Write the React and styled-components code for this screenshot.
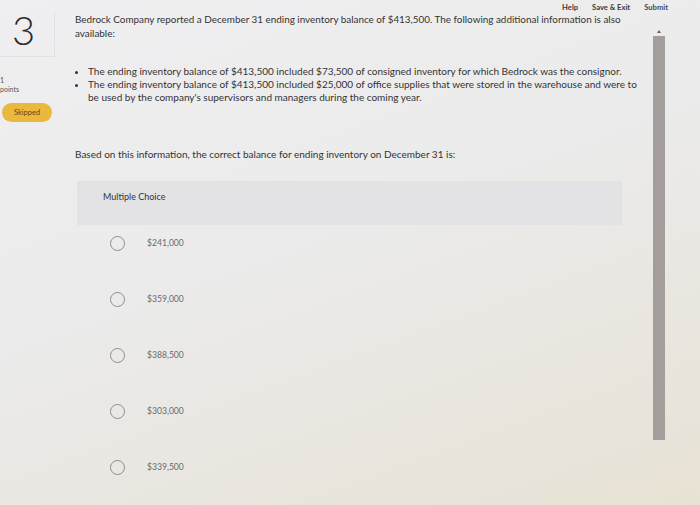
import React from 'react';
import styled, { createGlobalStyle } from 'styled-components';

const GlobalStyle = createGlobalStyle`
  html, body {
    margin: 0;
    padding: 0;
  }
  body {
    font-family: Lato, "Liberation Sans", Arial, sans-serif;
    color: #333;
  }
`;

const options = ['$241,000', '$359,000', '$388,500', '$303,000', '$339,500'];

const bullets = [
  'The ending inventory balance of $413,500 included $73,500 of consigned inventory for which Bedrock was the consignor.',
  "The ending inventory balance of $413,500 included $25,000 of office supplies that were stored in the warehouse and were to be used by the company's supervisors and managers during the coming year.",
];

const App = () => (
  <>
    <GlobalStyle />
    <Page>
      <Header>
        <NavLink>Help</NavLink>
        <NavLink>Save &amp; Exit</NavLink>
        <NavLink $strong>Submit</NavLink>
      </Header>
      <Body>
        <Rail>
          <NumberBox>3</NumberBox>
          <Points>
            <span>1</span>
            <span>points</span>
          </Points>
          <StatusPill>Skipped</StatusPill>
        </Rail>

        <Main>
          <Question>
            Bedrock Company reported a December 31 ending inventory balance of $413,500. The
            following additional information is also available:
          </Question>
          <BulletList>
            {bullets.map((b) => (
              <li key={b}>{b}</li>
            ))}
          </BulletList>
          <Prompt>
            Based on this information, the correct balance for ending inventory on December 31 is:
          </Prompt>

          <ChoicePanel>Multiple Choice</ChoicePanel>
          <OptionList>
            {options.map((o) => (
              <Option key={o}>
                <Radio />
                <OptionText>{o}</OptionText>
              </Option>
            ))}
          </OptionList>
        </Main>

        <Side>
          <ScrollTrack>
            <ScrollArrow />
          </ScrollTrack>
        </Side>
      </Body>
    </Page>
  </>
);

const Page = styled.div`
  width: 700px;
  height: 505px;
  overflow: hidden;
  background: linear-gradient(160deg, #efeff1 0%, #ebebeb 45%, #e9e6df 75%, #e8e2d4 100%);
`;

const Header = styled.div`
  height: 10px;
  padding-top: 2px;
  display: flex;
  justify-content: flex-end;
  gap: 14px;
  padding-right: 32px;
`;

const NavLink = styled.span`
  font-size: 7.6px;
  font-weight: 700;
  line-height: 10px;
  color: ${(p) => (p.$strong ? '#3f4a63' : '#3a3a3a')};
`;

const Body = styled.div`
  display: flex;
`;

const Rail = styled.div`
  width: 62px;
  flex-shrink: 0;
  display: flex;
  flex-direction: column;
`;

const NumberBox = styled.div`
  width: 42px;
  height: 44px;
  padding-left: 12px;
  border-right: 1px solid #e1e1e3;
  border-bottom: 1px solid #e1e1e3;
  font-size: 40px;
  font-weight: 300;
  line-height: 36px;
  color: #2d2d2d;
`;

const Points = styled.div`
  margin-top: 19px;
  display: flex;
  flex-direction: column;
  font-size: 7px;
  line-height: 9px;
  color: #555;
`;

const StatusPill = styled.div`
  margin: 9px 0 0 2px;
  width: 50px;
  height: 19px;
  border-radius: 10px;
  background: #e9b83c;
  color: #5b4a1d;
  font-size: 7.5px;
  display: flex;
  align-items: center;
  justify-content: center;
`;

const Main = styled.div`
  width: 565px;
  padding-left: 13px;
  flex-shrink: 0;
`;

const Question = styled.p`
  margin: 0;
  font-size: 9.9px;
  line-height: 14px;
  color: #333;
`;

const BulletList = styled.ul`
  margin: 25px 0 0;
  padding-left: 13px;
  font-size: 10px;
  line-height: 13px;
  color: #333;
`;

const Prompt = styled.p`
  margin: 43px 0 0;
  font-size: 10px;
  line-height: 14px;
  color: #333;
`;

const ChoicePanel = styled.div`
  margin: 20px 0 0 2px;
  width: 545px;
  height: 44px;
  box-sizing: border-box;
  padding: 10px 0 0 26px;
  background: #e3e2e4;
  font-size: 9px;
  color: #333;
`;

const OptionList = styled.div`
  margin-top: 8px;
  display: flex;
  flex-direction: column;
  gap: 36px;
`;

const Option = styled.div`
  height: 20px;
  display: flex;
  align-items: center;
  padding-left: 35px;
  gap: 22px;
`;

const Radio = styled.span`
  width: 15px;
  height: 15px;
  box-sizing: border-box;
  border-radius: 50%;
  border: 1.3px solid #8d8d92;
  background: transparent;
`;

const OptionText = styled.span`
  font-size: 8.6px;
  color: #6a6a6a;
`;

const Side = styled.div`
  flex: 1;
  padding-left: 13px;
`;

const ScrollTrack = styled.div`
  margin-top: 24px;
  width: 12px;
  height: 404px;
  background: #a39d9b;
  position: relative;
`;

const ScrollArrow = styled.span`
  position: absolute;
  top: -6px;
  left: 4px;
  width: 0;
  height: 0;
  border-left: 2px solid transparent;
  border-right: 2px solid transparent;
  border-bottom: 3px solid #666;
`;

export default App;
